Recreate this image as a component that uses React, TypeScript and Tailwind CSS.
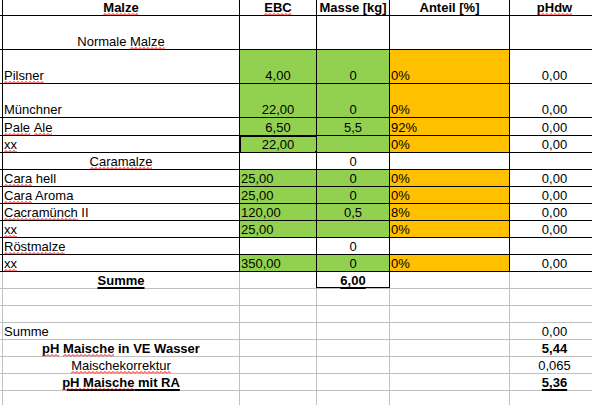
import React, { useId } from "react";

type Cell = {
  t?: React.ReactNode;
  a?: "l" | "c";
  bg?: "g" | "o";
  b?: boolean;
  u?: boolean;
  sel?: boolean;
  box?: boolean;
};

type Row = { h: string; dark: boolean; c: Cell[] };

// spell-check squiggle under a word
const W = ({ children, u }: { children: React.ReactNode; u?: boolean }) => {
  const id = useId();
  return (
    <span className="relative inline-block">
      <span className={u ? "underline decoration-[1.5px] underline-offset-[2px]" : ""}>{children}</span>
      <svg className="absolute left-0 -bottom-[1px] w-full h-[3px]" aria-hidden>
        <defs>
          <pattern id={id} width="4" height="3" patternUnits="userSpaceOnUse">
            <path d="M0 2.5 L2 0.5 L4 2.5" stroke="#ff0000" strokeWidth="1" fill="none" />
          </pattern>
        </defs>
        <rect width="100%" height="3" fill={`url(#${id})`} />
      </svg>
    </span>
  );
};

const widths = ["w-[237px]", "w-[77px]", "w-[73px]", "w-[120px]", "w-[90px]"];

const green = (t?: React.ReactNode, a: "l" | "c" = "c"): Cell => ({ t, a, bg: "g" });
const orange = (t?: React.ReactNode): Cell => ({ t, a: "l", bg: "o" });
const plain = (t?: React.ReactNode, a: "l" | "c" = "c"): Cell => ({ t, a });
const empty = () => [plain(), plain(), plain(), plain(), plain()];

const rows: Row[] = [
  {
    h: "h-[16px]",
    dark: true,
    c: [
      { t: <W>Malze</W>, a: "c", b: true },
      { t: <W>EBC</W>, a: "c", b: true },
      { t: "Masse [kg]", a: "c", b: true },
      { t: "Anteil [%]", a: "c", b: true },
      { t: <W>pHdw</W>, a: "c", b: true },
    ],
  },
  {
    h: "h-[34px]",
    dark: true,
    c: [plain(<>Normale <W>Malze</W></>), plain(), plain(), plain(), plain()],
  },
  {
    h: "h-[34px]",
    dark: true,
    c: [plain(<W>Pilsner</W>, "l"), green("4,00"), green("0"), orange("0%"), plain("0,00")],
  },
  {
    h: "h-[34px]",
    dark: true,
    c: [plain("Münchner", "l"), green("22,00"), green("0"), orange("0%"), plain("0,00")],
  },
  {
    h: "h-[18px]",
    dark: true,
    c: [plain(<><W>Pale</W> <W>Ale</W></>, "l"), green("6,50"), green("5,5"), orange("92%"), plain("0,00")],
  },
  {
    h: "h-[17px]",
    dark: true,
    c: [plain(<W>xx</W>, "l"), { ...green("22,00"), sel: true }, green(), orange("0%"), plain("0,00")],
  },
  {
    h: "h-[17px]",
    dark: true,
    c: [plain(<W>Caramalze</W>), plain(), plain("0"), plain(), plain()],
  },
  {
    h: "h-[17px]",
    dark: true,
    c: [plain(<><W>Cara</W> hell</>, "l"), green("25,00", "l"), green("0"), orange("0%"), plain("0,00")],
  },
  {
    h: "h-[17px]",
    dark: true,
    c: [plain(<><W>Cara</W> Aroma</>, "l"), green("25,00", "l"), green("0"), orange("0%"), plain("0,00")],
  },
  {
    h: "h-[17px]",
    dark: true,
    c: [plain(<><W>Cacramünch</W> II</>, "l"), green("120,00", "l"), green("0,5"), orange("8%"), plain("0,00")],
  },
  {
    h: "h-[17px]",
    dark: true,
    c: [plain(<W>xx</W>, "l"), green("25,00", "l"), green(), orange("0%"), plain("0,00")],
  },
  {
    h: "h-[17px]",
    dark: true,
    c: [plain(<W>Röstmalze</W>, "l"), plain(), plain("0"), plain(), plain()],
  },
  {
    h: "h-[17px]",
    dark: true,
    c: [plain(<W>xx</W>, "l"), green("350,00", "l"), green("0"), orange("0%"), plain("0,00")],
  },
  {
    h: "h-[17px]",
    dark: false,
    c: [
      { t: "Summe", a: "c", b: true, u: true },
      plain(),
      { t: "6,00", a: "c", b: true, u: true, box: true },
      plain(),
      plain(),
    ],
  },
  { h: "h-[17px]", dark: false, c: empty() },
  { h: "h-[17px]", dark: false, c: empty() },
  { h: "h-[17px]", dark: false, c: [plain("Summe", "l"), plain(), plain(), plain(), plain("0,00")] },
  {
    h: "h-[17px]",
    dark: false,
    c: [
      { t: <><W>pH</W> <W>Maische</W> in VE Wasser</>, a: "c", b: true },
      plain(),
      plain(),
      plain(),
      { t: "5,44", a: "c", b: true },
    ],
  },
  {
    h: "h-[17px]",
    dark: false,
    c: [plain(<W>Maischekorrektur</W>), plain(), plain(), plain(), plain("0,065")],
  },
  {
    h: "h-[17px]",
    dark: false,
    c: [
      { t: <><W u>pH Maische</W> mit RA</>, a: "c", b: true, u: true },
      plain(),
      plain(),
      plain(),
      { t: "5,36", a: "c", b: true, u: true },
    ],
  },
  { h: "h-[17px]", dark: false, c: empty() },
];

export default function App() {
  return (
    <div className="w-[592px] h-[405px] overflow-hidden bg-white text-black font-['Liberation_Sans',Arial,sans-serif] text-[13px]">
      {rows.map((r, i) => {
        const lc = r.dark ? "border-black" : "border-[#c0c0c0]";
        return (
          <div key={i} className={`flex ${r.h}`}>
            <div className={`w-[3px] shrink-0 border-r border-b ${lc}`} />
            {r.c.map((c, j) => (
              <div
                key={j}
                className={`relative shrink-0 flex items-end border-r border-b ${lc} ${widths[j]} ${
                  c.bg === "g" ? "bg-[#92d050]" : c.bg === "o" ? "bg-[#ffc000]" : "bg-white"
                } ${c.a === "l" ? "justify-start pl-[1px]" : "justify-center"}`}
              >
                {c.t !== undefined && (
                  <span
                    className={`leading-[15px] whitespace-nowrap ${c.b ? "font-bold" : ""} ${
                      c.u ? "underline decoration-[1.5px] underline-offset-[2px]" : ""
                    }`}
                  >
                    {c.t}
                  </span>
                )}
                {c.sel && (
                  <>
                    <div className="absolute -left-px -top-px -right-[2px] -bottom-[2px] border-2 border-black" />
                    <div className="absolute -right-[3px] -bottom-[3px] w-[4px] h-[4px] bg-black" />
                  </>
                )}
                {c.box && (
                  <div className="absolute -left-px -top-px -right-px bottom-0 border border-black" />
                )}
              </div>
            ))}
          </div>
        );
      })}
    </div>
  );
}
